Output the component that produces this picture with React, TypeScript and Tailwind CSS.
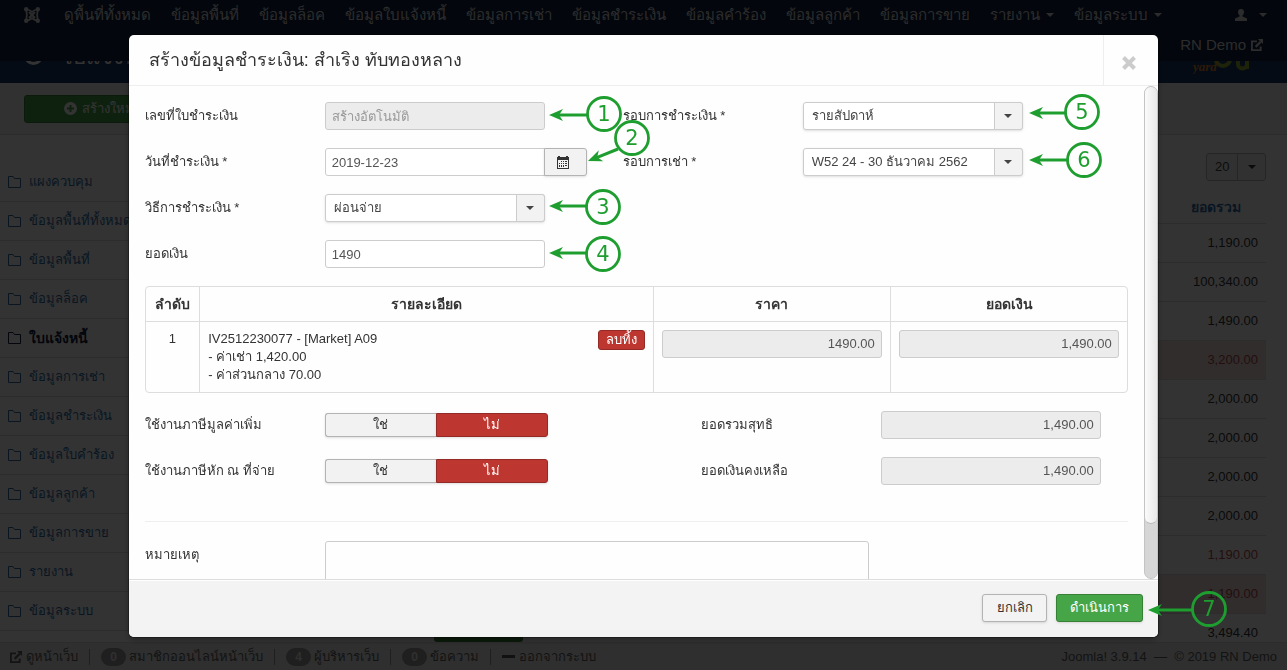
import React, { useState } from 'react';

const navItems = [
  { label: 'ดูพื้นที่ทั้งหมด' },
  { label: 'ข้อมูลพื้นที่' },
  { label: 'ข้อมูลล็อค' },
  { label: 'ข้อมูลใบแจ้งหนี้' },
  { label: 'ข้อมูลการเช่า' },
  { label: 'ข้อมูลชำระเงิน' },
  { label: 'ข้อมูลคำร้อง' },
  { label: 'ข้อมูลลูกค้า' },
  { label: 'ข้อมูลการขาย' },
  { label: 'รายงาน', caret: true },
  { label: 'ข้อมูลระบบ', caret: true },
];

const sideItems = [
  'แผงควบคุม',
  'ข้อมูลพื้นที่ทั้งหมด',
  'ข้อมูลพื้นที่',
  'ข้อมูลล็อค',
  'ใบแจ้งหนี้',
  'ข้อมูลการเช่า',
  'ข้อมูลชำระเงิน',
  'ข้อมูลใบคำร้อง',
  'ข้อมูลลูกค้า',
  'ข้อมูลการขาย',
  'รายงาน',
  'ข้อมูลระบบ',
];

const totals = [
  { value: '1,190.00' },
  { value: '100,340.00' },
  { value: '1,490.00' },
  { value: '3,200.00', error: true, shaded: true },
  { value: '2,000.00' },
  { value: '2,000.00' },
  { value: '2,000.00' },
  { value: '2,000.00' },
  { value: '1,190.00', error: true },
  { value: '1,190.00', error: true, shaded: true },
  { value: '3,494.40' },
];

const inputClass =
  'h-7 w-[220px] rounded-[3px] border border-[#ccc] bg-white px-1.5 text-[13px] leading-[18px] text-[#555] outline-none';
const readonlyClass =
  'h-7 w-[220px] rounded-[3px] border border-[#ccc] bg-[#ececec] px-1.5 text-[13px] leading-[18px] text-[#555] outline-none placeholder:text-[#999]';

const Caret = () => (
  <svg width="8" height="4" viewBox="0 0 8 4" className="inline-block fill-current">
    <path d="M0 0h8L4 4z" />
  </svg>
);

const ExternalIcon = ({ size }: { size: number }) => (
  <svg width={size} height={size} viewBox="0 0 13 13" className="inline-block shrink-0" fill="none" stroke="currentColor" strokeWidth="2">
    <path d="M6.500 2.500H1v9.500h9.500V8" />
    <path d="M5 8.500l5.500-5.500" strokeWidth="2.500" />
    <path d="M7.500 0H13v5.500z" fill="currentColor" stroke="none" />
  </svg>
);

const FolderIcon = () => (
  <svg width="13" height="12" viewBox="0 0 13 12" className="shrink-0" fill="none" stroke="currentColor">
    <path d="M.5 11.500v-11H5l1.500 2h6v9z" />
  </svg>
);

const JoomlaIcon = () => (
  <svg width="16" height="16" viewBox="0 0 16 16" fill="none" stroke="currentColor">
    <path d="M5 11l6-6M5 5l6 6" strokeWidth="2" />
    <path d="M2.500 2.500C5 2.500 6 3 8 4.800C10 3 11 2.500 13.500 2.500C13.500 5 13.600 6 13.100 8C13.600 10 13.500 11 13.500 13.500C11 13.500 10 13 8 11.200C6 13 5 13.500 2.500 13.500C2.500 11 2.400 10 2.900 8C2.400 6 2.500 5 2.500 2.500z" strokeWidth="1.700" />
    <g fill="currentColor" stroke="none">
      <circle cx="2.200" cy="2.200" r="2.200" />
      <circle cx="13.800" cy="2.200" r="2.200" />
      <circle cx="2.200" cy="13.800" r="2.200" />
      <circle cx="13.800" cy="13.800" r="2.200" />
    </g>
  </svg>
);

const CalendarIcon = () => (
  <svg width="12" height="13" viewBox="0 0 12 13" className="ml-3" fill="#333">
    <path d="M0 1h1V0h2v1h6V0h2v1h1v12H0zM1 4v8h10V4z" fillRule="evenodd" />
    <path d="M4 5h1v1H4zM6 5h1v1H6zM8 5h2v1H8zM4 7h1v1H4zM6 7h1v1H6zM8 7h2v1H8zM2 7h1v1H2zM2 9h1v2H2zM4 9h1v2H4zM6 9h1v2H6zM8 9h2v1H8z" />
  </svg>
);

interface SelectBoxProps {
  id: string;
  value: string;
}

const SelectBox = ({ id, value }: SelectBoxProps) => (
  <div className="relative w-[220px]">
    <select
      id={id}
      className="block h-7 w-full appearance-none rounded-[3px] border border-[#ccc] bg-white pr-8 pl-2 text-[13px] text-[#444] shadow-sm outline-none"
    >
      <option>{value}</option>
    </select>
    <span className="pointer-events-none absolute inset-y-0 right-0 flex w-[29px] items-center justify-center rounded-r-[3px] border border-[#ccc] bg-[#f2f2f2] text-[#444]">
      <Caret />
    </span>
  </div>
);

interface FieldProps {
  id: string;
  label: string;
  children: React.ReactNode;
}

const Field = ({ id, label, children }: FieldProps) => (
  <div className="flex h-7 items-center">
    <label htmlFor={id} className="w-[180px] shrink-0">
      {label}
    </label>
    {children}
  </div>
);

const YesNo = ({ id }: { id: string }) => {
  const [yes, setYes] = useState(false);
  return (
    <div className="flex h-6 w-[223px]">
      <button
        id={id}
        type="button"
        onClick={() => setYes(true)}
        className={`flex-1 rounded-l-[3px] border ${yes ? 'border-[#2f6f2f] bg-[#46a546] text-white' : 'border-r-0 border-[#b3b3b3] bg-[#f2f2f2] shadow-sm'}`}
      >
        ใช่
      </button>
      <button
        type="button"
        onClick={() => setYes(false)}
        className={`flex-1 rounded-r-[3px] border ${yes ? 'border-[#b3b3b3] bg-[#f2f2f2]' : 'border-[#942a25] bg-[#bd362f] text-white shadow-sm'}`}
      >
        ไม่
      </button>
    </div>
  );
};

const Navbar = () => (
  <nav className="h-[61px] shrink-0 bg-[#10223e] text-[15px] leading-[30px] text-[#d9d9d9]">
    <div className="flex h-[30px] items-center justify-between pr-5 pl-6">
      <div className="flex items-center">
        <JoomlaIcon />
        <div className="ml-[14px] flex">
          {navItems.map((item) => (
            <a key={item.label} href="#" className="flex items-center gap-[6px] px-[10px] whitespace-nowrap">
              {item.label}
              {item.caret && <Caret />}
            </a>
          ))}
        </div>
      </div>
      <a href="#" aria-label="User menu" className="flex items-center gap-3">
        <svg width="12" height="12" viewBox="0 0 12 12" fill="currentColor">
          <path d="M6 0c2 0 3 1.300 3 3 0 1.500-.6 2.700-1.500 3.300v1.200L12 9.500V12H0V9.500l4.500-2V6.300C3.600 5.700 3 4.500 3 3c0-1.700 1-3 3-3z" />
        </svg>
        <Caret />
      </a>
    </div>
    <div className="flex h-[30px] items-center justify-end pr-6">
      <a href="#" className="flex items-center gap-[5px]">
        RN Demo <ExternalIcon size={12} />
      </a>
    </div>
  </nav>
);

const Header = () => (
  <header className="flex h-[22px] shrink-0 items-end justify-between overflow-hidden bg-[#1a3867] pr-9 pb-[7px] pl-6 text-white">
    <h1 className="flex items-center gap-[18px] pb-1 text-[22px] leading-[30px]">
      <svg width="19" height="19" viewBox="0 0 19 19" fill="none" stroke="currentColor" strokeWidth="3" className="mb-1">
        <circle cx="9.500" cy="9.500" r="8" />
      </svg>
      ใบแจ้งหนี้
    </h1>
    <svg width="58" height="28" viewBox="0 0 58 28" className="shrink-0">
      <g fill="none" stroke="#8fae2b" strokeWidth="4">
        <circle cx="30" cy="11" r="7" />
        <path d="M45 10v6c0 6 9 6 9 0V4M54 10v11" />
      </g>
      <text x="0" y="23" fill="#d9832b" className="font-['Liberation_Serif',serif] text-[13px] font-bold italic">
        yard
      </text>
    </svg>
  </header>
);

const Sidebar = () => (
  <aside className="w-[211px] shrink-0 pt-7">
    <ul>
      {sideItems.map((label) => (
        <li key={label} className="border-b border-[#ddd]">
          <a
            href="#"
            className={`flex h-[38px] items-center gap-2 px-2 whitespace-nowrap ${label === 'ใบแจ้งหนี้' ? 'text-[14px] font-bold text-[#10223e]' : 'text-[#3071a9]'}`}
          >
            <FolderIcon />
            {label}
          </a>
        </li>
      ))}
    </ul>
  </aside>
);

const InvoiceList = () => (
  <main className="flex-1 pt-[18px] pr-[21px]">
    <div className="flex justify-end">
      <div className="relative">
        <select
          aria-label="Limit"
          className="block h-7 w-[60px] appearance-none rounded-[3px] border border-[#bbb] bg-[#f5f5f5] pl-2 text-[13px] text-[#444]"
        >
          <option>20</option>
        </select>
        <span className="pointer-events-none absolute inset-y-0 right-0 flex w-[29px] items-center justify-center border-l border-[#bbb] text-[#333]">
          <Caret />
        </span>
      </div>
    </div>
    <table className="mt-[10px] w-full border-collapse">
      <thead>
        <tr className="h-8 text-[14px] text-[#3071a9]">
          <th />
          <th className="w-[101px]">ยอดรวม</th>
        </tr>
      </thead>
      <tbody>
        {totals.map((row, i) => (
          <tr
            key={i}
            className={`h-[39px] border-t border-[#ddd] ${row.shaded ? 'bg-[#f2dede]' : ''} ${row.error ? 'text-[#b94a48]' : 'text-[#333]'}`}
          >
            <td className="pl-[223px]">
              {i === totals.length - 1 && <span className="block h-[18px] w-[89px] rounded-[3px] bg-[#378137]" />}
            </td>
            <td className="pr-2 text-right">{row.value}</td>
          </tr>
        ))}
      </tbody>
    </table>
  </main>
);

const Badge = ({ count }: { count: number }) => (
  <span className="w-[25px] rounded-full bg-[#999] text-center text-[12px] leading-[18px] font-bold text-[#ebebeb]">{count}</span>
);

const StatusBar = () => (
  <footer className="z-10 flex h-7 shrink-0 items-center justify-between border-t border-[#ddd] bg-[#ebebeb] px-[10px] text-[#626262]">
    <div className="flex items-center gap-[11px]">
      <a href="#" className="flex items-center gap-1">
        <ExternalIcon size={12} />
        ดูหน้าเว็บ
      </a>
      <i className="h-4 border-l border-[#999]" />
      <span className="flex items-center gap-[3px]">
        <Badge count={0} />
        สมาชิกออนไลน์หน้าเว็บ
      </span>
      <i className="h-4 border-l border-[#999]" />
      <span className="flex items-center gap-[3px]">
        <Badge count={4} />
        ผู้บริหารเว็บ
      </span>
      <i className="h-4 border-l border-[#999]" />
      <a href="#" className="flex items-center gap-[3px]">
        <Badge count={0} />
        ข้อความ
      </a>
      <i className="h-4 border-l border-[#999]" />
      <a href="#" className="flex items-center gap-1">
        <i className="h-[3px] w-[13px] bg-[#555]" />
        ออกจากระบบ
      </a>
    </div>
    <p className="whitespace-pre">Joomla! 3.9.14  —  © 2019 RN Demo</p>
  </footer>
);

const PaymentForm = () => (
  <form className="flex-1 px-4 pt-4">
    <div className="grid grid-cols-[478px_1fr]">
      <div className="space-y-[18px]">
        <Field id="bill-no" label="เลขที่ใบชำระเงิน">
          <input id="bill-no" readOnly placeholder="สร้างอัตโนมัติ" className={readonlyClass} />
        </Field>
        <Field id="pay-date" label="วันที่ชำระเงิน *">
          <input
            id="pay-date"
            defaultValue="2019-12-23"
            className="h-7 w-[220px] rounded-l-[3px] border border-[#ccc] bg-white px-1.5 text-[13px] text-[#555] outline-none"
          />
          <button type="button" aria-label="Calendar" className="-ml-px h-7 w-[43px] rounded-r-[3px] border border-[#b3b3b3] bg-[#f2f2f2] shadow-sm">
            <CalendarIcon />
          </button>
        </Field>
        <Field id="method" label="วิธีการชำระเงิน *">
          <SelectBox id="method" value="ผ่อนจ่าย" />
        </Field>
        <Field id="amount" label="ยอดเงิน">
          <input id="amount" defaultValue="1490" className={inputClass} />
        </Field>
      </div>
      <div className="space-y-[18px]">
        <Field id="cycle" label="รอบการชำระเงิน *">
          <SelectBox id="cycle" value="รายสัปดาห์" />
        </Field>
        <Field id="rent-cycle" label="รอบการเช่า *">
          <SelectBox id="rent-cycle" value="W52 24 - 30 ธันวาคม 2562" />
        </Field>
      </div>
    </div>

    <div className="mt-[18px] rounded-[4px] border border-[#ddd]">
      <table className="w-full table-fixed border-collapse">
        <thead>
          <tr className="h-[34px] border-b border-[#ddd] text-[14px]">
            <th className="w-[54px]">ลำดับ</th>
            <th className="border-l border-[#ddd]">รายละเอียด</th>
            <th className="w-[237px] border-l border-[#ddd]">ราคา</th>
            <th className="w-[237px] border-l border-[#ddd]">ยอดเงิน</th>
          </tr>
        </thead>
        <tbody>
          <tr className="align-top">
            <td className="p-2 text-center">1</td>
            <td className="border-l border-[#ddd] p-2">
              <div className="flex items-start justify-between">
                <div>
                  IV2512230077 - [Market] A09
                  <br />- ค่าเช่า 1,420.00
                  <br />- ค่าส่วนกลาง 70.00
                </div>
                <button type="button" className="h-5 w-[47px] rounded-[3px] border border-[#942a25] bg-[#bd362f] leading-[18px] text-white">
                  ลบทิ้ง
                </button>
              </div>
            </td>
            <td className="border-l border-[#ddd] p-2">
              <input aria-label="ราคา" readOnly value="1490.00" className={`${readonlyClass} block text-right`} />
            </td>
            <td className="border-l border-[#ddd] p-2">
              <input aria-label="ยอดเงิน" readOnly value="1,490.00" className={`${readonlyClass} block text-right`} />
            </td>
          </tr>
        </tbody>
      </table>
    </div>

    <div className="mt-[18px] grid grid-cols-[556px_1fr] gap-y-[18px]">
      <Field id="vat" label="ใช้งานภาษีมูลค่าเพิ่ม">
        <YesNo id="vat" />
      </Field>
      <Field id="net" label="ยอดรวมสุทธิ">
        <input id="net" readOnly value="1,490.00" className={`${readonlyClass} text-right`} />
      </Field>
      <Field id="wht" label="ใช้งานภาษีหัก ณ ที่จ่าย">
        <YesNo id="wht" />
      </Field>
      <Field id="remain" label="ยอดเงินคงเหลือ">
        <input id="remain" readOnly value="1,490.00" className={`${readonlyClass} text-right`} />
      </Field>
    </div>

    <hr className="mt-9 mb-[19px] border-[#eee]" />

    <div className="flex items-start">
      <label htmlFor="note" className="w-[180px] shrink-0 pt-[5px]">
        หมายเหตุ
      </label>
      <textarea id="note" rows={4} className="w-[544px] resize-none rounded-[3px] border border-[#ccc] outline-none" />
    </div>
  </form>
);

const PaymentDialog = () => (
  <div
    role="dialog"
    className="fixed inset-x-0 top-[35px] z-30 mx-auto flex h-[calc(90vh-1px)] w-4/5 flex-col overflow-hidden rounded-[5px] bg-[#fefefe] shadow-[0_0_0_1px_rgba(0,0,0,0.3),0_3px_7px_rgba(0,0,0,0.3)]"
  >
    <div className="flex h-[51px] shrink-0 items-center justify-between border-b border-[#eee] pl-5">
      <h3 className="text-[18px] leading-9 text-[#333]">สร้างข้อมูลชำระเงิน: สำเริง ทับทองหลาง</h3>
      <button type="button" aria-label="Close" className="flex h-full w-[55px] items-center justify-center border-l border-[#eee] pt-[6px] pr-[5px]">
        <svg width="14" height="14" viewBox="0 0 14 14" stroke="#ccc" strokeWidth="4">
          <path d="M1.500 1.500l11 11M12.500 1.500l-11 11" />
        </svg>
      </button>
    </div>
    <div className="flex min-h-0 flex-1 overflow-hidden">
      <PaymentForm />
      <div className="w-[14px] shrink-0 rounded-full border border-[#c4c4c4] bg-[#d6d6d6]">
        <div className="h-[89%] rounded-full border-b border-[#bbb] bg-linear-to-r from-[#fbfbfb] to-[#e8e8e8]" />
      </div>
    </div>
    <div className="flex h-[58px] shrink-0 items-center justify-end gap-[9px] border-t border-[#ddd] bg-[#f3f3f3] pr-[15px] pb-0.5 shadow-[inset_0_1px_0_#fff]">
      <button type="button" className="h-7 w-[65px] rounded-[3px] border border-[#b3b3b3] bg-[#f3f3f3] shadow-sm">
        ยกเลิก
      </button>
      <button type="button" className="h-7 w-[87px] rounded-[3px] border border-[#378137] bg-[#46a546] text-white shadow-sm">
        ดำเนินการ
      </button>
    </div>
  </div>
);

// numbered callouts: circle centre, arrow start and arrow tip
const callouts = [
  { n: 1, cx: 604, cy: 114, x1: 587, y1: 115, x2: 549, y2: 115 },
  { n: 2, cx: 632, cy: 138, x1: 618, y1: 149, x2: 588, y2: 161 },
  { n: 3, cx: 603, cy: 207, x1: 586, y1: 206, x2: 549, y2: 206 },
  { n: 4, cx: 603, cy: 254, x1: 586, y1: 253, x2: 549, y2: 253 },
  { n: 5, cx: 1082, cy: 112, x1: 1065, y1: 113, x2: 1029, y2: 113 },
  { n: 6, cx: 1084, cy: 160, x1: 1067, y1: 160, x2: 1029, y2: 160 },
  { n: 7, cx: 1209, cy: 609, x1: 1192, y1: 610, x2: 1148, y2: 610 },
];

const Callouts = () => (
  <svg width="1287" height="670" className="pointer-events-none fixed top-0 left-0 z-40">
    {callouts.map((c) => {
      const angle = (Math.atan2(c.y2 - c.y1, c.x2 - c.x1) * 180) / Math.PI;
      const length = Math.hypot(c.x2 - c.x1, c.y2 - c.y1);
      return (
        <g key={c.n}>
          <circle cx={c.cx} cy={c.cy} r="16.500" fill="none" stroke="#1f9e30" strokeWidth="2.800" />
          <g transform={`translate(${c.x2} ${c.y2}) rotate(${angle + 180})`} fill="#1f9e30">
            <path d="M0 0l14-6-4 6 4 6z" />
            <rect x="8" y="-1.500" width={length - 8} height="3" />
          </g>
          <text x={c.cx} y={c.cy + 7} textAnchor="middle" fill="#1f9e30" className="font-['DejaVu_Sans',sans-serif] text-[21px]">
            {c.n}
          </text>
        </g>
      );
    })}
  </svg>
);

export default function App() {
  return (
    <div className="flex h-screen flex-col overflow-hidden bg-white font-['Liberation_Sans',sans-serif] text-[13px] leading-[18px] text-[#333]">
      <Navbar />
      <Header />
      <div className="flex h-[52px] shrink-0 items-center border-b border-[#ddd] bg-[#f5f5f5] pl-6">
        <button type="button" className="flex h-7 w-[150px] items-center justify-center gap-[5px] rounded-[3px] border border-[#378137] bg-[#46a546] text-white">
          <svg width="13" height="13" viewBox="0 0 13 13">
            <circle cx="6.500" cy="6.500" r="6.500" fill="#fff" />
            <path d="M6.500 3v7M3 6.500h7" stroke="#46a546" strokeWidth="2" />
          </svg>
          สร้างใหม่
        </button>
      </div>
      <div className="flex min-h-0 flex-1 overflow-hidden">
        <Sidebar />
        <InvoiceList />
      </div>
      <StatusBar />

      <div className="fixed inset-0 z-20 bg-black/80" />
      <PaymentDialog />
      <Callouts />
    </div>
  );
}
